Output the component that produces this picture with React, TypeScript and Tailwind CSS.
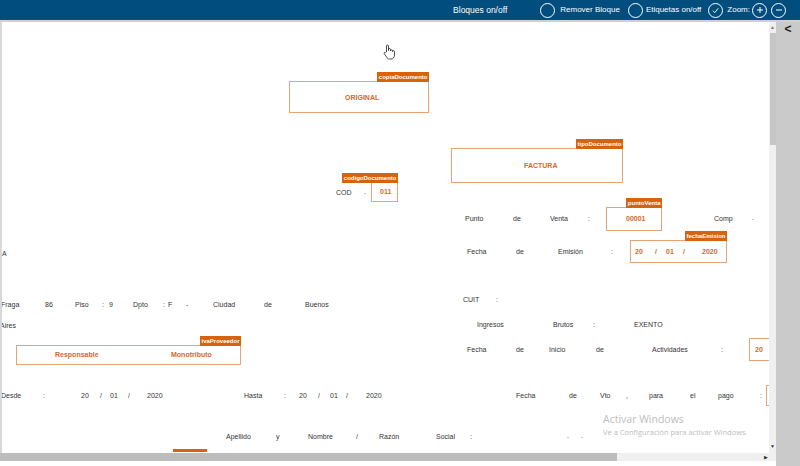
import React from 'react';

type Txt = { t: string; x: number; y: number };
type Field = {
  label?: string;
  x: number;
  y: number;
  w: number;
  h: number;
  items: Txt[];
};

// screen coords, y = text centre
const texts: Txt[] = [
  { t: 'COD', x: 336, y: 193 },
  { t: '.', x: 364, y: 192 },
  { t: 'Punto', x: 465, y: 219 },
  { t: 'de', x: 513, y: 219 },
  { t: 'Venta', x: 550, y: 219 },
  { t: ':', x: 588, y: 219 },
  { t: 'Comp', x: 714, y: 219 },
  { t: '.', x: 752, y: 218 },
  { t: 'Fecha', x: 467, y: 252 },
  { t: 'de', x: 516, y: 252 },
  { t: 'Emisión', x: 558, y: 252 },
  { t: ':', x: 611, y: 252 },
  { t: 'A', x: 2, y: 254 },
  { t: 'CUIT', x: 463, y: 300 },
  { t: ':', x: 496, y: 300 },
  { t: 'Fraga', x: 1, y: 305 },
  { t: '86', x: 45, y: 305 },
  { t: 'Piso', x: 75, y: 305 },
  { t: ':', x: 102, y: 305 },
  { t: '9', x: 109, y: 305 },
  { t: 'Dpto', x: 133, y: 305 },
  { t: ':', x: 163, y: 305 },
  { t: 'F', x: 168, y: 305 },
  { t: '-', x: 186, y: 305 },
  { t: 'Ciudad', x: 213, y: 305 },
  { t: 'de', x: 264, y: 305 },
  { t: 'Buenos', x: 305, y: 305 },
  { t: 'Ingresos', x: 477, y: 325 },
  { t: 'Brutos', x: 553, y: 325 },
  { t: ':', x: 593, y: 325 },
  { t: 'EXENTO', x: 634, y: 325 },
  { t: 'Aires', x: 0, y: 326 },
  { t: 'Fecha', x: 467, y: 350 },
  { t: 'de', x: 516, y: 350 },
  { t: 'Inicio', x: 549, y: 350 },
  { t: 'de', x: 596, y: 350 },
  { t: 'Actividades', x: 652, y: 350 },
  { t: ':', x: 721, y: 350 },
  { t: 'Desde', x: 1, y: 396 },
  { t: ':', x: 43, y: 396 },
  { t: '20', x: 81, y: 396 },
  { t: '/', x: 100, y: 396 },
  { t: '01', x: 110, y: 396 },
  { t: '/', x: 128, y: 396 },
  { t: '2020', x: 147, y: 396 },
  { t: 'Hasta', x: 244, y: 396 },
  { t: ':', x: 284, y: 396 },
  { t: '20', x: 299, y: 396 },
  { t: '/', x: 318, y: 396 },
  { t: '01', x: 330, y: 396 },
  { t: '/', x: 346, y: 396 },
  { t: '2020', x: 366, y: 396 },
  { t: 'Fecha', x: 516, y: 396 },
  { t: 'de', x: 569, y: 396 },
  { t: 'Vto', x: 600, y: 396 },
  { t: ',', x: 626, y: 396 },
  { t: 'para', x: 649, y: 396 },
  { t: 'el', x: 690, y: 396 },
  { t: 'pago', x: 718, y: 396 },
  { t: ':', x: 760, y: 396 },
  { t: 'Apellido', x: 226, y: 437 },
  { t: 'y', x: 276, y: 437 },
  { t: 'Nombre', x: 308, y: 437 },
  { t: '/', x: 356, y: 437 },
  { t: 'Razón', x: 379, y: 437 },
  { t: 'Social', x: 436, y: 437 },
  { t: ':', x: 470, y: 437 },
  { t: '.', x: 567, y: 436 },
  { t: '.', x: 581, y: 436 },
];

const fields: Field[] = [
  { label: 'copiaDocumento', x: 289, y: 81, w: 140, h: 32, items: [{ t: 'ORIGINAL', x: 345, y: 98 }] },
  { label: 'tipoDocumento', x: 451, y: 148, w: 172, h: 35, items: [{ t: 'FACTURA', x: 524, y: 166 }] },
  { label: 'codigoDocumento', x: 371, y: 182, w: 27, h: 20, items: [{ t: '011', x: 380, y: 192 }] },
  { label: 'puntoVenta', x: 606, y: 207, w: 56, h: 24, items: [{ t: '00001', x: 626, y: 219 }] },
  {
    label: 'fechaEmision',
    x: 630,
    y: 240,
    w: 97,
    h: 23,
    items: [
      { t: '20', x: 635, y: 252 },
      { t: '/', x: 655, y: 252 },
      { t: '01', x: 666, y: 252 },
      { t: '/', x: 683, y: 252 },
      { t: '2020', x: 702, y: 252 },
    ],
  },
  {
    label: 'ivaProveedor',
    x: 16,
    y: 345,
    w: 225,
    h: 20,
    items: [
      { t: 'Responsable', x: 55, y: 355 },
      { t: 'Monotributo', x: 171, y: 355 },
    ],
  },
  { x: 749, y: 338, w: 40, h: 23, items: [{ t: '20', x: 755, y: 350 }] },
  { x: 766, y: 385, w: 30, h: 21, items: [] },
];

const TOP = 22;

const Circle = ({ children }: { children?: React.ReactNode }) => (
  <span className="w-[15px] h-[15px] rounded-full border border-white flex items-center justify-center">
    {children}
  </span>
);

const App = () => {
  return (
    <div className="w-[800px] h-[466px] overflow-hidden bg-white flex flex-col font-['Liberation_Sans',Arial,sans-serif]">
      {/* Toolbar */}
      <div className="h-[20px] bg-[#014d7d] flex items-center justify-end pr-[14px] text-white text-[8px]">
        <span className="text-[8.5px]">Bloques on/off</span>
        <span className="ml-[33px]"><Circle /></span>
        <span className="ml-[5px]">Remover Bloque</span>
        <span className="ml-[8px]"><Circle /></span>
        <span className="ml-[3px]">Etiquetas on/off</span>
        <span className="ml-[7px]">
          <Circle>
            <svg width="9" height="9" viewBox="0 0 10 10" fill="none" stroke="white" strokeWidth="1">
              <path d="M2 5.2 L4.2 7.4 L8 2.6" />
            </svg>
          </Circle>
        </span>
        <span className="ml-[4px]">Zoom:</span>
        <span className="ml-[2px]">
          <Circle>
            <svg width="8" height="8" viewBox="0 0 8 8" stroke="white" strokeWidth="1">
              <path d="M4 1 V7 M1 4 H7" />
            </svg>
          </Circle>
        </span>
        <span className="ml-[4px]">
          <Circle>
            <svg width="8" height="8" viewBox="0 0 8 8" stroke="white" strokeWidth="1">
              <path d="M1 4 H7" />
            </svg>
          </Circle>
        </span>
      </div>
      <div className="h-[2px] bg-[#c9d2da]" />

      <div className="flex-1 flex min-h-0">
        {/* Canvas column */}
        <div className="flex-1 flex flex-col min-w-0">
          <div className="flex-1 flex min-h-0">
            <div className="relative flex-1 overflow-hidden bg-white text-[7px] leading-none text-[#333] border-l-2 border-[#d8d8d8]">
              {/* hand cursor */}
              <svg className="absolute left-[381px] top-[22px]" width="12" height="16" viewBox="0 0 12 16" fill="white" stroke="#222" strokeWidth="0.8">
                <path d="M3.5 8 V2 a1 1 0 0 1 2 0 V6.5 V5.5 a1 1 0 0 1 2 0 V6.8 a1 1 0 0 1 2 0 V7.6 a1 1 0 0 1 2 0 V11 c0 2.4 -1.5 4 -3.5 4 H6.5 c-1.4 0 -2.3 -0.8 -3 -2 L1.2 9.6 a1 1 0 0 1 1.6 -1.1 Z" />
              </svg>

              {texts.map((it, i) => (
                <span
                  key={i}
                  className="absolute whitespace-nowrap"
                  style={{ left: it.x - 2, top: it.y - TOP - 4 }}
                >
                  {it.t}
                </span>
              ))}

              {fields.map((f, i) => (
                <div
                  key={i}
                  className="absolute border border-[#e8a472]"
                  style={{ left: f.x - 2, top: f.y - TOP, width: f.w, height: f.h }}
                >
                  {f.label && (
                    <span className="absolute right-[-1px] bottom-full h-[10px] px-[1.5px] bg-[#d9620d] text-white font-bold text-[6px] leading-[10px] whitespace-nowrap">
                      {f.label}
                    </span>
                  )}
                  {f.items.map((it, j) => (
                    <span
                      key={j}
                      className="absolute whitespace-nowrap font-bold text-[#d5692a]"
                      style={{ left: it.x - f.x - 1, top: it.y - f.y - 5 }}
                    >
                      {it.t}
                    </span>
                  ))}
                </div>
              ))}

              <div className="absolute left-[171px] top-[427px] w-[34px] h-[3px] bg-[#e0600f]" />

              {/* Windows watermark */}
              <div className="absolute left-[601px] top-[392px] text-[#bdbdbd] font-['Open_Sans',sans-serif] leading-none whitespace-nowrap">
                <div className="text-[10.5px]">Activar Windows</div>
                <div className="text-[7.5px] mt-[4px]">Ve a Configuración para activar Windows.</div>
              </div>
            </div>

            {/* Vertical scrollbar */}
            <div className="w-[7px] bg-[#f0f0f0] flex flex-col items-center">
              <span className="text-[5px] leading-none text-[#777] mt-[3px]">▲</span>
              <div className="w-[6px] h-[112px] bg-[#c6c6c6] mt-[3px]" />
              <div className="flex-1" />
              <span className="text-[5px] leading-none text-[#333] mb-[4px]">▼</span>
            </div>
          </div>

          {/* Horizontal scrollbar */}
          <div className="h-[8px] flex bg-[#f0f0f0]">
            <div className="w-[617px] bg-[#bdbdbd]" />
            <div className="flex-1 flex items-center justify-end pr-[1px]">
              <span className="text-[5px] leading-none text-[#333]">▶</span>
            </div>
            <div className="w-[7px] bg-[#f0f0f0]" />
          </div>
          <div className="h-[5px] bg-white" />
        </div>

        {/* Side panel */}
        <div className="w-[24px] bg-[#cacaca] flex justify-center">
          <span className="mt-[1px] text-[12px] leading-none text-[#222] font-bold">&lt;</span>
        </div>
      </div>
    </div>
  );
};

export default App;
